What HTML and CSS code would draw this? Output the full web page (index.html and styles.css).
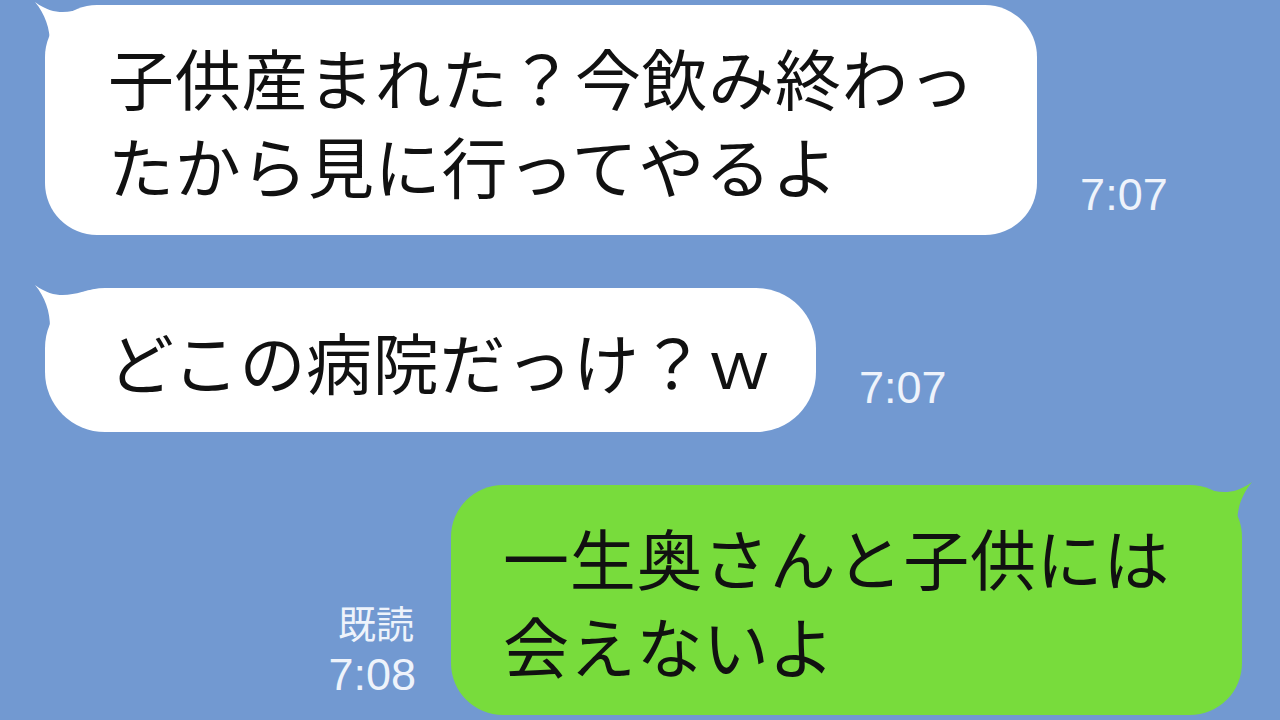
FILE: index.html
```html
<!DOCTYPE html>
<html lang="ja">
<head>
<meta charset="utf-8">
<link rel="stylesheet" href="styles.css">
</head>
<body>
<div class="chat">
  <div class="row row-left">
    <div class="bubble bubble-in b1">
      <svg class="tail tail-left" width="80" height="60" viewBox="0 0 80 60"><path d="M2,3 C12,15 17,29 17,46 L67,46 L67,7 C47,7 29,23 2,3 Z"/></svg>
      <div class="text">子供産まれた？今飲み終わっ<br>たから見に行ってやるよ</div>
    </div>
    <div class="time t1">7:07</div>
  </div>
  <div class="row row-left">
    <div class="bubble bubble-in b2">
      <svg class="tail tail-left" width="80" height="60" viewBox="0 0 80 60"><path d="M2,3 C12,15 17,29 17,46 L67,46 L67,7 C47,7 29,23 2,3 Z"/></svg>
      <div class="text">どこの病院だっけ？ｗ</div>
    </div>
    <div class="time t2">7:07</div>
  </div>
  <div class="row row-right">
    <div class="meta">
      <div class="read">既読</div>
      <div class="time">7:08</div>
    </div>
    <div class="bubble bubble-out b3">
      <svg class="tail tail-right" width="80" height="60" viewBox="0 0 80 60"><path d="M2,3 C12,15 17,29 17,46 L67,46 L67,7 C47,7 29,23 2,3 Z"/></svg>
      <div class="text">一生奥さんと子供には<br>会えないよ</div>
    </div>
  </div>
</div>
</body>
</html>
```

FILE: styles.css
```css
html, body {
  margin: 0;
  padding: 0;
}
body {
  width: 1280px;
  height: 720px;
  overflow: hidden;
  background: #7299d1;
  font-family: "Noto Sans CJK JP", "Noto Sans", sans-serif;
}
.chat {
  display: flex;
  flex-direction: column;
  gap: 53px;
  padding-top: 5px;
}
.row {
  display: flex;
  align-items: flex-end;
}
.row-left {
  padding-left: 45px;
  gap: 43px;
}
.row-right {
  justify-content: flex-end;
  padding-right: 38px;
  gap: 35px;
}
.bubble {
  position: relative;
  border-radius: 52px;
}
.bubble-in { background: #ffffff; }
.bubble-in .tail path { fill: #ffffff; }
.bubble-out { background: #78dc3c; }
.bubble-out .tail path { fill: #78dc3c; }
.text {
  position: relative;
  font-size: 66px;
  line-height: 88px;
  letter-spacing: 0.7px;
  color: #111;
  white-space: nowrap;
}
.b1 { padding: 27px 62px 27px 63px; }
.b2 { padding: 28px 43px 28px 63px; border-radius: 60px; }
.b3 { padding: 27px 72px 27px 52px; }
.tail {
  position: absolute;
  top: -6px;
  overflow: visible;
}
.tail-left { left: -12px; }
.tail-right { right: -12px; transform: scaleX(-1); }
.time {
  font-family: "Liberation Sans", Arial, sans-serif;
  font-size: 45px;
  line-height: 52px;
  color: #eef3fb;
}
.t1 { margin-bottom: 14px; }
.t2 { margin-bottom: 18px; }
.meta {
  display: flex;
  flex-direction: column;
  align-items: flex-end;
  margin-bottom: 14px;
}
.read {
  font-size: 38px;
  line-height: 55px;
  color: #eef3fb;
  margin-right: 2px;
}
```
